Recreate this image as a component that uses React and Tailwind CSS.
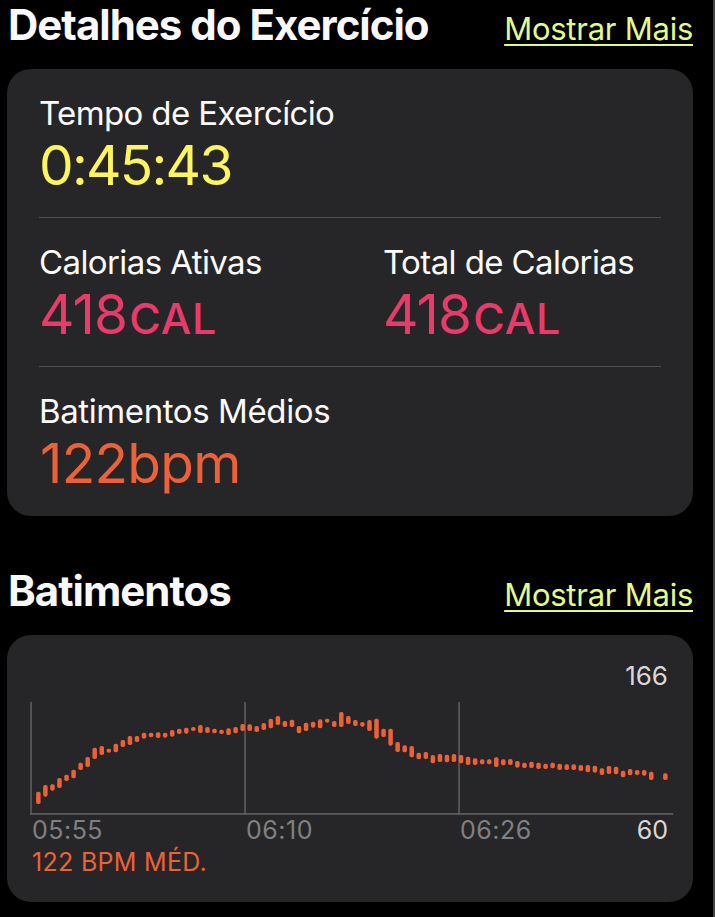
import React from "react";

// [top, bottom] of each heart rate sample, null where nothing was recorded.
// Three units per pixel, measured down from 12px above the plot.
const SAMPLES = [
  [305, 342], [285, 320], [283, 302], [264, 294], [254, 273], [239, 265],
  [218, 240], [201, 231], [173, 207], [168, 195], [176, 188], [161, 187],
  [150, 171], [138, 165], [138, 156], [128, 146], [128, 142], [127, 144],
  [128, 143], [120, 140], [116, 132], [113, 131], [111, 123], [105, 129],
  [111, 129], [116, 130], [119, 132], [115, 135], [111, 130], [102, 123],
  [103, 123], [108, 126], [99, 120], [86, 115], [78, 105], [93, 111],
  [89, 111], [108, 130], [98, 123], [95, 113], [88, 115], [86, 98],
  [93, 111], [66, 111], [78, 102], [90, 108], [96, 110], [90, 123],
  [86, 146], [116, 141], [116, 167], [156, 186], [166, 187], [168, 202],
  [188, 208], [186, 207], [195, 220], [192, 216], [194, 217], [192, 216],
  [195, 220], [200, 225], [205, 225], [208, 223], [208, 223], [202, 231],
  [208, 226], [207, 225], [213, 233], [218, 234], [215, 234], [218, 237],
  [221, 237], [218, 235], [221, 240], [223, 240], [223, 240], [225, 243],
  [225, 247], [227, 248], [235, 255], [228, 252], [230, 253], [242, 262],
  [237, 256], [240, 255], [240, 257], [245, 270], null, [250, 270],
];

const TIMES = ["05:55", "06:10", "06:26"];

function SectionHeader({ title, className }) {
  return (
    <div className={`flex items-baseline justify-between pl-px ${className}`}>
      <h2 className="text-[42px] leading-[48px] font-bold tracking-[-1px] text-[#f8f8f8]">
        {title}
      </h2>
      <a
        href="#"
        className="text-[31px] leading-[40px] tracking-[-0.25px] text-[#e1fb8a] underline decoration-2 underline-offset-4 [text-decoration-skip-ink:none]"
      >
        Mostrar Mais
      </a>
    </div>
  );
}

function Metric({ label, value, unit, labelClass, valueClass }) {
  return (
    <div>
      <div className={`text-[33px] leading-[40px] text-[#fafafa] ${labelClass}`}>{label}</div>
      <div className={`text-[55px] leading-[64px] ${valueClass}`}>
        {value}
        {unit}
      </div>
    </div>
  );
}

function Cal() {
  return (
    <span className="ml-0.5 text-[43px] leading-none font-medium tracking-[0.9px]">CAL</span>
  );
}

function HeartChart() {
  return (
    <svg width="644" height="113" viewBox="0 0 644 113" className="mt-2.5 block">
      <g fill="#5a5a5d">
        <rect x="0.2" y="0" width="1.7" height="113" />
        <rect x="214.2" y="0" width="1.7" height="113" />
        <rect x="428.2" y="0" width="1.7" height="113" />
        <rect x="0.2" y="111" width="643" height="1.8" />
      </g>
      <g fill="#ed6138">
        {SAMPLES.map((s, i) =>
          s ? (
            <rect
              key={i}
              x={6.1 + i * 7.045}
              y={s[0] / 3 - 12}
              width="4.5"
              height={(s[1] - s[0]) / 3}
              rx="1.8"
            />
          ) : null
        )}
      </g>
    </svg>
  );
}

export default function App() {
  return (
    <div className="h-[917px] w-[715px] overflow-hidden border-r-2 border-[#454547] bg-black pr-5 pl-[7px] font-['Inter',sans-serif]">
      <SectionHeader title="Detalhes do Exercício" className="h-[69px] pt-px" />

      <div className="h-[447px] rounded-[24px] bg-[#262628] px-8">
        <div className="h-[149px] border-b border-[#525254] pt-6">
          <Metric
            label="Tempo de Exercício"
            value="0:45:43"
            labelClass="tracking-[-0.63px]"
            valueClass="tracking-[-1.75px] text-[#fdf460]"
          />
        </div>
        <div className="grid h-[149px] grid-cols-[344px_1fr] border-b border-[#525254] pt-6 whitespace-nowrap">
          <Metric
            label="Calorias Ativas"
            value="418"
            unit={<Cal />}
            labelClass="tracking-[-0.6px]"
            valueClass="tracking-[-0.9px] text-[#e93b6b]"
          />
          <Metric
            label="Total de Calorias"
            value="418"
            unit={<Cal />}
            labelClass="tracking-[-0.6px]"
            valueClass="tracking-[-0.9px] text-[#e93b6b]"
          />
        </div>
        <div className="pt-6">
          <Metric
            label="Batimentos Médios"
            value="122"
            unit="bpm"
            labelClass="tracking-[-0.4px]"
            valueClass="pl-px tracking-[-0.7px] text-[#ed6138]"
          />
        </div>
      </div>

      <SectionHeader title="Batimentos" className="h-[119px] pt-[51px]" />

      <div className="h-[267px] rounded-[24px] bg-[#262628] pt-[25px] pr-[19px] pl-[23px] text-[25px] leading-8">
        <div className="pr-1.5 text-right text-[26px] text-[#d8d8da]">166</div>
        <HeartChart />
        <div className="-mt-px flex pr-1.5 pl-0.5 tracking-[0.5px] text-[#808082]">
          {TIMES.map((t) => (
            <span key={t} className="w-[214px] shrink-0">
              {t}
            </span>
          ))}
          <span className="-ml-10 grow text-right tracking-normal text-[#d8d8da]">60</span>
        </div>
        <div className="pl-0.5 tracking-[0.3px] text-[#ed6138]">122 BPM MÉD.</div>
      </div>
    </div>
  );
}
